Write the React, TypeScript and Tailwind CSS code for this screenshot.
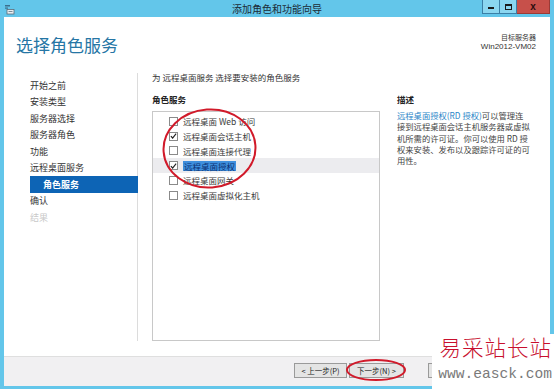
import React from "react";

const cjk = "font-['Noto_Sans_CJK_SC','Liberation_Sans',sans-serif]";

const navItems = [
  { label: "开始之前" },
  { label: "安装类型" },
  { label: "服务器选择" },
  { label: "服务器角色" },
  { label: "功能" },
  { label: "远程桌面服务" },
  { label: "角色服务", active: true },
  { label: "确认" },
  { label: "结果", disabled: true },
];

const services = [
  { label: "远程桌面 Web 访问", checked: false },
  { label: "远程桌面会话主机", checked: true },
  { label: "远程桌面连接代理", checked: false },
  { label: "远程桌面授权", checked: true, selected: true },
  { label: "远程桌面网关", checked: false },
  { label: "远程桌面虚拟化主机", checked: false },
];

function Checkbox({ checked }: { checked: boolean }) {
  return (
    <span className="w-[9px] h-[9px] shrink-0 border border-[#8a8a8a] bg-white flex items-center justify-center">
      {checked && (
        <svg width="8" height="8" viewBox="0 0 8 8" fill="none" aria-hidden="true">
          <path d="M1 4.2 L3 6.3 L7 1.3" stroke="#222" strokeWidth="1.3" />
        </svg>
      )}
    </span>
  );
}

function WindowIcon() {
  return (
    <svg width="11" height="11" viewBox="0 0 11 11" aria-hidden="true">
      <rect x="1" y="1" width="5" height="1.5" fill="#3d6f8c" />
      <rect x="1" y="3.5" width="3" height="1.2" fill="#3d6f8c" />
      <rect x="3" y="5.5" width="7" height="4.5" fill="#e8eef2" stroke="#5a6a78" strokeWidth="0.8" />
      <rect x="4.5" y="7" width="4" height="1" fill="#7a8a96" />
    </svg>
  );
}

export default function App() {
  return (
    <div className={`relative w-[554px] h-[389px] overflow-hidden bg-[#63c6ea] flex flex-col ${cjk}`}>
      {/* Title bar */}
      <div className="h-[17px] shrink-0 flex items-center relative">
        <div className="pl-[4px] pt-[1px]">
          <WindowIcon />
        </div>
        <div className="absolute left-0 right-0 top-0 h-[17px] flex items-center justify-center text-[10px] text-[#1b2b36]">
          添加角色和功能向导
        </div>
        <div className="absolute top-0 right-[4px] flex h-[14px]">
          <div className="w-[18px] h-[14px] border border-[#3b7fa6] border-t-0 bg-[#8ad6f0] flex items-center justify-center">
            <span className="w-[6px] h-[2px] bg-[#1a1a1a] mt-[3px]" />
          </div>
          <div className="w-[17px] h-[14px] border-b border-r border-[#3b7fa6] bg-[#8ad6f0] flex items-center justify-center">
            <span className="w-[7px] h-[6px] border border-[#1a1a1a] border-t-2" />
          </div>
          <div className="w-[33px] h-[14px] bg-[#c7504a] border-b border-r border-[#9a3a36] flex items-center justify-center text-[10px] font-bold text-[#2a0e0e] font-['Liberation_Sans',sans-serif] leading-none">
            x
          </div>
        </div>
      </div>

      {/* Window body */}
      <div className="flex-1 flex flex-col ml-[4px] mr-[4px] bg-white">
        {/* Header */}
        <div className="h-[53px] shrink-0 flex justify-between pl-[12px] pr-[14px]">
          <div className="pt-[19px] text-[17px] leading-none text-[#2676a5]">选择角色服务</div>
          <div className="pt-[17px] flex flex-col items-end leading-none">
            <span className="text-[7px] text-[#333]">目标服务器</span>
            <span className="text-[8px] mt-[2px] text-[#333] font-['Liberation_Sans',sans-serif]">Win2012-VM02</span>
          </div>
        </div>

        {/* Content */}
        <div className="flex-1 flex pb-[15px]">
          <div className="w-[134px] shrink-0 border-r border-[#dcdcdc] pt-[4px] pl-[26px] flex flex-col mt-[3px]">
            {navItems.map((item) => (
              <div
                key={item.label}
                className={`h-[16.5px] flex items-center text-[9px] leading-none ${
                  item.active
                    ? "bg-[#0d64b5] text-white font-bold pl-[13px] -mr-px"
                    : item.disabled
                    ? "text-[#c9c9c9]"
                    : "text-[#333]"
                }`}
              >
                {item.label}
              </div>
            ))}
          </div>

          <div className="flex-1 pl-[14px] flex flex-col">
            <div className="h-[14px] flex items-center text-[8.5px] text-[#333]">
              为 远程桌面服务 选择要安装的角色服务
            </div>
            <div className="flex-1 flex gap-[17px] mt-[8px]">
              <div className="w-[228px] flex flex-col">
                <div className="h-[15px] flex items-center text-[8.5px] font-bold text-[#222]">角色服务</div>
                <div className="flex-1 mt-[4px] border border-[#c8c8c8] pt-[2px] flex flex-col">
                  {services.map((s) => (
                    <div
                      key={s.label}
                      className={`h-[14.8px] flex items-center gap-[5px] pl-[16px] text-[8.5px] leading-none ${
                        s.selected ? "bg-[#ececef]" : ""
                      }`}
                    >
                      <Checkbox checked={s.checked} />
                      <span
                        className={
                          s.selected
                            ? "bg-[#3f8fdd] text-[#0b2f73] px-[1px] py-[1px]"
                            : "text-[#3a3a3a]"
                        }
                      >
                        {s.label}
                      </span>
                    </div>
                  ))}
                </div>
              </div>

              <div className="flex-1 flex flex-col pr-[8px]">
                <div className="h-[15px] flex items-center text-[8.5px] font-bold text-[#222]">描述</div>
                <div className="mt-[3px] text-[8.3px] leading-[11.3px] text-[#444] flex flex-col">
                  <span>
                    <span className="text-[#2a86c8]">远程桌面授权(RD 授权)</span>可以管理连
                  </span>
                  <span>接到远程桌面会话主机服务器或虚拟</span>
                  <span>机所需的许可证。你可以使用 RD 授</span>
                  <span>权来安装、发布以及跟踪许可证的可</span>
                  <span>用性。</span>
                </div>
              </div>
            </div>
          </div>
        </div>

        {/* Footer */}
        <div className="h-[30px] shrink-0 bg-[#f1f0f2] border-t border-[#dfdfdf] flex items-start pt-[6px] pl-[290px] gap-[2px]">
          <button className="w-[53px] h-[15px] border border-[#9a9a9a] bg-[#e4e4e4] text-[7.5px] text-[#222] leading-none flex items-center justify-center">
            &lt; 上一步(P)
          </button>
          <button className="w-[55px] h-[15px] border border-[#9a9a9a] bg-[#e4e4e4] text-[7.5px] text-[#222] leading-none flex items-center justify-center">
            下一步(N) &gt;
          </button>
          <button className="ml-[22px] w-[55px] h-[15px] border border-[#9a9a9a] bg-[#e4e4e4]" aria-label="安装" />
        </div>
      </div>
      <div className="h-[3px] shrink-0" />

      {/* Red annotation ellipses */}
      <svg className="absolute left-0 top-0 pointer-events-none" width="554" height="389" aria-hidden="true">
        <ellipse cx="209.5" cy="148.5" rx="46" ry="39" fill="none" stroke="#d11a2a" strokeWidth="2" transform="rotate(-4 209.5 148.5)" />
        <ellipse cx="376" cy="370" rx="29" ry="10" fill="none" stroke="#d11a2a" strokeWidth="2" />
      </svg>

      {/* Watermark */}
      <div className="absolute right-0 bottom-0 w-[122px] h-[55px] bg-white flex flex-col items-end pr-[2px] pt-[1px]">
        <span className="text-[21.5px] leading-[24px] font-light text-[#c8102e] tracking-[1px]">易采站长站</span>
        <span className="mt-[8px] text-[14.6px] leading-none text-[#7a7a7a] font-['Liberation_Mono',monospace]">www.easck.com</span>
      </div>
    </div>
  );
}
